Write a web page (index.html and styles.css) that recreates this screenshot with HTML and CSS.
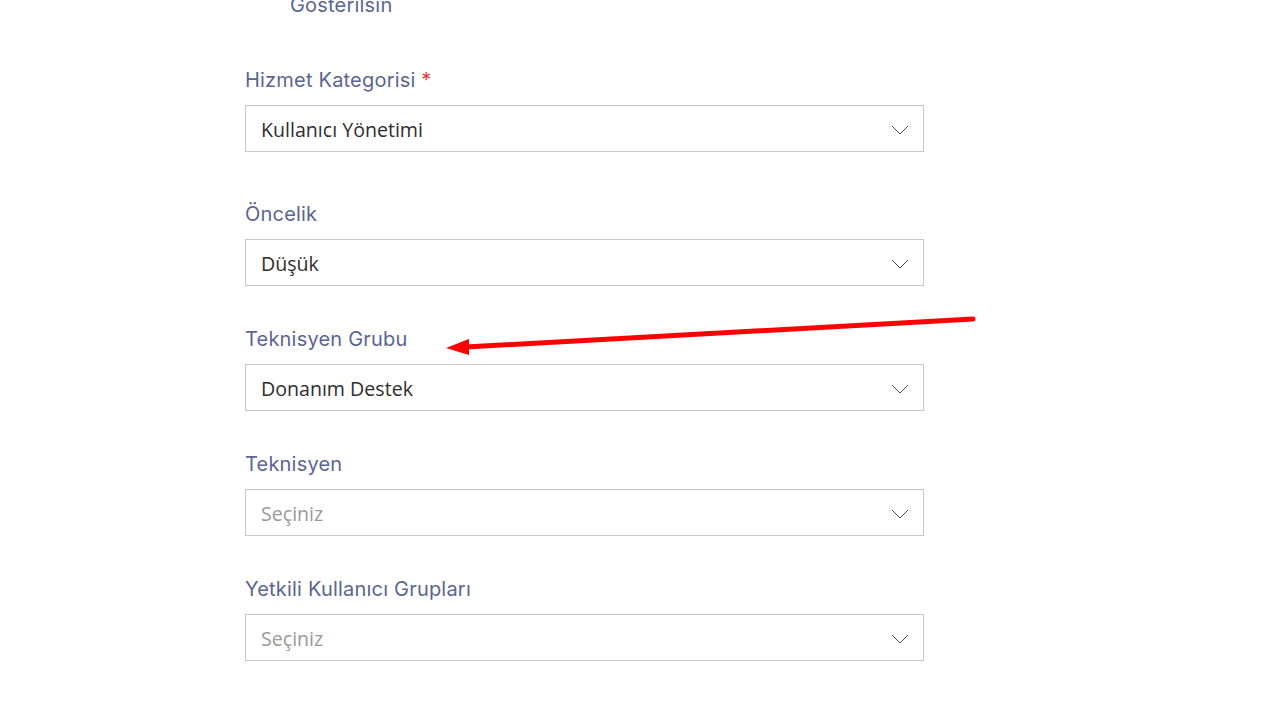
FILE: index.html
```html
<!DOCTYPE html>
<html lang="tr">
<head>
  <meta charset="UTF-8" />
  <title>Talep Formu</title>
  <meta name="viewport" content="width=device-width, initial-scale=1" />
  <link rel="stylesheet" href="styles.css">
</head>
<body>
  <form class="ticket-form">
    <div class="check-row">
      <span class="check-label">Gösterilsin</span>
    </div>

    <div class="field field-required">
      <label class="field-label">Hizmet Kategorisi <span class="req">*</span></label>
      <div class="select">
        <span class="select-value">Kullanıcı Yönetimi</span>
        <svg class="chevron" viewBox="0 0 18 10"><path d="M1 1l8 8 8-8"/></svg>
      </div>
    </div>

    <div class="field">
      <label class="field-label">Öncelik</label>
      <div class="select">
        <span class="select-value">Düşük</span>
        <svg class="chevron" viewBox="0 0 18 10"><path d="M1 1l8 8 8-8"/></svg>
      </div>
    </div>

    <div class="field">
      <label class="field-label">Teknisyen Grubu</label>
      <div class="select">
        <span class="select-value">Donanım Destek</span>
        <svg class="chevron" viewBox="0 0 18 10"><path d="M1 1l8 8 8-8"/></svg>
      </div>
    </div>

    <div class="field">
      <label class="field-label">Teknisyen</label>
      <div class="select">
        <span class="select-value placeholder">Seçiniz</span>
        <svg class="chevron" viewBox="0 0 18 10"><path d="M1 1l8 8 8-8"/></svg>
      </div>
    </div>

    <div class="field">
      <label class="field-label">Yetkili Kullanıcı Grupları</label>
      <div class="select">
        <span class="select-value placeholder">Seçiniz</span>
        <svg class="chevron" viewBox="0 0 18 10"><path d="M1 1l8 8 8-8"/></svg>
      </div>
    </div>
  </form>

  <!-- annotation arrow pointing at the technician group -->
  <svg class="annotation" viewBox="0 0 1262 704">
    <line x1="973" y1="319" x2="466" y2="347" />
    <polygon points="446,348 469,339 469,355" />
  </svg>
</body>
</html>
```

FILE: styles.css
```css
body {
  margin: 0;
  background: #fff;
  font-family: 'Open Sans', sans-serif;
  overflow: hidden;
}
.ticket-form {
  width: 679px;
  padding-left: 245px;
  margin-top: -6px;
}
.check-row {
  padding-left: 45px;
  height: 22px;
}
.check-label {
  font-family: 'Inter', sans-serif;
  font-size: 20px;
  letter-spacing: 0.2px;
  color: #5b6592;
  line-height: 22px;
}
.field {
  margin-top: 41px;
}
.field-required {
  margin-top: 52px;
}
.field-required + .field {
  margin-top: 50px;
}
.field-label {
  display: block;
  font-family: 'Inter', sans-serif;
  font-size: 20px;
  letter-spacing: 0.2px;
  color: #5b6592;
  line-height: 24px;
  margin-bottom: 13px;
}
.req {
  color: #e53935;
}
.select {
  box-sizing: border-box;
  height: 47px;
  border: 1px solid #c8c8c8;
  display: flex;
  align-items: center;
  justify-content: space-between;
  padding: 2px 14px 0 15px;
}
.select-value {
  font-size: 19.6px;
  color: #2e2e2e;
}
.placeholder {
  color: #9a9a9a;
}
.chevron {
  width: 18px;
  height: 10px;
  fill: none;
  stroke: #4a4a4a;
  stroke-width: 1;
}
.annotation {
  position: absolute;
  left: 0;
  top: 0;
  width: 1262px;
  height: 704px;
  pointer-events: none;
}
.annotation line {
  stroke: #ff0000;
  stroke-width: 5;
  stroke-linecap: round;
}
.annotation polygon {
  fill: #ff0000;
}
```
